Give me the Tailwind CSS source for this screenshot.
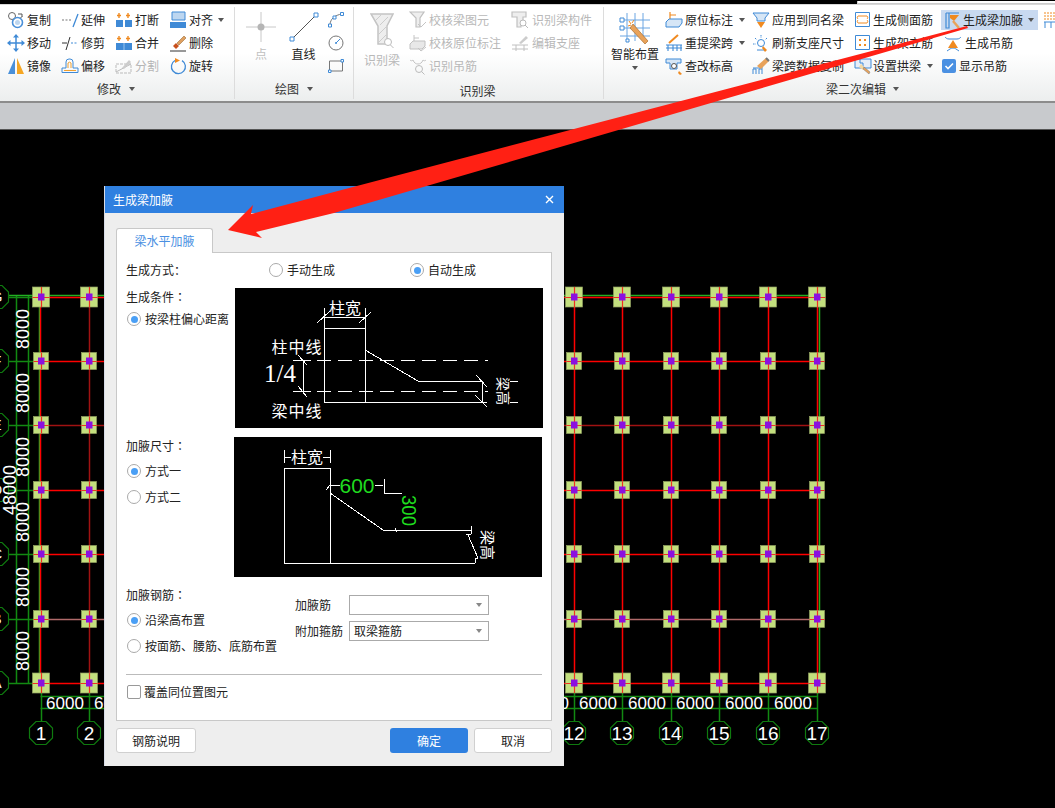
<!DOCTYPE html>
<html lang="zh-CN">
<head>
  <meta charset="UTF-8" />
  <title>生成梁加腋</title>
  <script src="https://cdn.jsdelivr.net/npm/@tailwindcss/browser@4"></script>
</head>
<body class="bg-black">
<div class="relative w-[1055px] h-[808px] overflow-hidden flex flex-col text-[12px] leading-none text-[#222] [font-family:'Noto_Sans_CJK_SC','Noto_Sans',sans-serif]">

  <!-- Ribbon -->
  <div class="relative h-[99px] shrink-0 flex border-t-[#d8d8d8] border-t border-b-2 border-b-[#8c8c8c] mt-[4px] bg-gradient-to-b from-white from-50% to-[#eceeee]">
    <div class="absolute left-[857px] -top-[4px] right-0 h-[3px] border-l border-b border-[#cccccc] bg-white"></div>

    <!-- 修改 -->
    <div class="w-[235px] shrink-0 h-[92px] mt-[2px] flex flex-col border-r border-[#dcdcdc]">
      <div class="h-[74px] pt-px pl-[7px] flex">
        <div class="w-[53px] flex flex-col">
          <div class="h-[23px] flex items-center gap-[2px]">
            <svg class="w-[18px] h-[18px]" viewBox="0 0 18 18" fill="none"><circle cx="5" cy="5" r="3.500" stroke="#666"/><circle cx="10.500" cy="11.500" r="5" stroke="#4a90d9" stroke-width="1.600"/><circle cx="10.500" cy="11.500" r="2.500" fill="#bcd6f0"/><path d="M11 3h4v3M13.500 7l1.500-1.500" stroke="#555"/></svg>
            <span>复制</span>
          </div>
          <div class="h-[23px] flex items-center gap-[2px]">
            <svg class="w-[18px] h-[18px]" viewBox="0 0 18 18" fill="#3f8ad6"><path d="M9 0l3 3.500H6zM9 18l-3-3.500h6zM0 9l3.500-3v6zM18 9l-3.500 3V6z"/><path d="M9 3v12M3 9h12" stroke="#3f8ad6" stroke-width="1.500"/></svg>
            <span>移动</span>
          </div>
          <div class="h-[23px] flex items-center gap-[2px]">
            <svg class="w-[18px] h-[18px]" viewBox="0 0 18 18"><path d="M8 1v16H1z" fill="#4a90d9"/><path d="M10 1v16h7z" fill="#f5a623"/></svg>
            <span>镜像</span>
          </div>
        </div>
        <div class="w-[54px] flex flex-col pl-px">
          <div class="h-[23px] flex items-center gap-[2px]">
            <svg class="w-[18px] h-[18px]" viewBox="0 0 18 18" fill="none"><path d="M1 9h10" stroke="#777" stroke-dasharray="2 1.500"/><path d="M12 16l5-13" stroke="#3f8ad6" stroke-width="1.300"/></svg>
            <span>延伸</span>
          </div>
          <div class="h-[23px] flex items-center gap-[2px]">
            <svg class="w-[18px] h-[18px]" viewBox="0 0 18 18" fill="none"><path d="M1 9h5" stroke="#333"/><path d="M10 9h7" stroke="#3f8ad6" stroke-dasharray="2 1.500"/><path d="M5 16l4-13" stroke="#333"/></svg>
            <span>修剪</span>
          </div>
          <div class="h-[23px] flex items-center gap-[2px]">
            <svg class="w-[18px] h-[18px]" viewBox="0 0 18 18" fill="none"><path d="M1 15.500V11h4V5a3 3 0 0 1 3-3h1a3 3 0 0 1 3 3v6h5v4.500z" stroke="#3f8ad6"/><path d="M3 13.500h12M7 11V6a2 2 0 0 1 3 0v5" stroke="#f0a030"/></svg>
            <span>偏移</span>
          </div>
        </div>
        <div class="w-[55px] flex flex-col pl-px">
          <div class="h-[23px] flex items-center gap-[2px]">
            <svg class="w-[18px] h-[18px]" viewBox="0 0 18 18"><path d="M1 9h7v7H1zM10 9h7v7h-7z" fill="#3f8ad6"/><path d="M4 2v5M2 4.500h4M13 2v5M11 4.500h4" stroke="#f08a20" stroke-width="1.400"/></svg>
            <span>打断</span>
          </div>
          <div class="h-[23px] flex items-center gap-[2px]">
            <svg class="w-[18px] h-[18px]" viewBox="0 0 18 18"><path d="M1 9h16v7H1z" fill="#3f8ad6"/><path d="M9 9v7" stroke="#9cc4ec"/><path d="M4 2v5M2 4.500h4M13 2v5M11 4.500h4" stroke="#f08a20" stroke-width="1.400"/></svg>
            <span>合并</span>
          </div>
          <div class="h-[23px] flex items-center gap-[2px] text-[#b5b5b5]">
            <svg class="w-[18px] h-[18px]" viewBox="0 0 18 18" fill="none"><path d="M1 7h15v9H1z" stroke="#bbb" stroke-dasharray="3 1"/><path d="M1 15L16 7" stroke="#bbb"/><path d="M7 11l7-8 2 2-7 7z" fill="#ccc"/></svg>
            <span>分割</span>
          </div>
        </div>
        <div class="flex flex-col">
          <div class="h-[23px] flex items-center gap-[2px]">
            <svg class="w-[18px] h-[18px]" viewBox="0 0 18 18"><path d="M3 1h13v8H3z" fill="#bcd6f0" stroke="#3f8ad6"/><path d="M1 11h16v6H1z" fill="#3f8ad6"/></svg>
            <span>对齐</span>
            <svg class="w-[6px] h-[4px] ml-[3px]" viewBox="0 0 6 4"><path d="M0 0h6L3 4z" fill="#555"/></svg>
          </div>
          <div class="h-[23px] flex items-center gap-[2px]">
            <svg class="w-[18px] h-[18px]" viewBox="0 0 18 18" fill="none"><path d="M8 9L15 2l2 2-7 7z" fill="#e0a060" stroke="#8a5a20" stroke-width=".5"/><path d="M4 12l3-3 3 3-3 3z" fill="#c8501c"/><path d="M1 17h16" stroke="#333"/></svg>
            <span>删除</span>
          </div>
          <div class="h-[23px] flex items-center gap-[2px]">
            <svg class="w-[18px] h-[18px]" viewBox="0 0 18 18" fill="none"><path d="M6 3.500A7 7 0 1 0 13 3.600" stroke="#3f8ad6" stroke-width="1.300"/><path d="M6 1v5l5-2.500z" fill="#f08a20"/></svg>
            <span>旋转</span>
          </div>
        </div>
      </div>
      <div class="h-[16px] flex items-center justify-center gap-[8px] pr-[2px]">
        <span class="text-[#333]">修改</span>
        <svg class="w-[6px] h-[4px]" viewBox="0 0 6 4"><path d="M0 0h6L3 4z" fill="#555"/></svg>
      </div>
    </div>

    <!-- 绘图 -->
    <div class="w-[119px] shrink-0 h-[92px] mt-[2px] flex flex-col border-r border-[#dcdcdc]">
      <div class="h-[74px] pl-[11px] flex">
        <div class="w-[30px] flex flex-col items-center">
          <svg class="w-[30px] h-[30px] mt-[5px]" viewBox="0 0 30 30" fill="none"><path d="M15 0v30M0 15h30" stroke="#c8c8c8"/><circle cx="15" cy="15" r="3.500" fill="#b5b5b5"/></svg>
          <span class="mt-[6px] text-[#c0c0c0]">点</span>
        </div>
        <div class="w-[29px] ml-[13px] flex flex-col items-center">
          <svg class="w-[30px] h-[30px] mt-[5px]" viewBox="0 0 30 30" fill="none"><path d="M3 27L27 3" stroke="#555"/><path d="M1 25h4v4H1zM25 1h4v4h-4z" fill="#fff" stroke="#3f8ad6"/></svg>
          <span class="mt-[6px]">直线</span>
        </div>
        <div class="ml-[10px] flex flex-col pt-px">
          <div class="h-[23px] flex items-center">
            <svg class="w-[16px] h-[16px]" viewBox="0 0 16 16" fill="none"><path d="M2 13C2 7 7 3 14 2" stroke="#777"/><path d="M.5 12h3v3h-3zM12.500 .5h3v3h-3zM5 4h3v3H5z" fill="#fff" stroke="#3f8ad6"/></svg>
          </div>
          <div class="h-[23px] flex items-center">
            <svg class="w-[16px] h-[16px]" viewBox="0 0 16 16" fill="none"><circle cx="8" cy="8" r="7" stroke="#777"/><path d="M8 8l4-4" stroke="#3f8ad6"/><circle cx="8" cy="8" r="1" fill="#3f8ad6"/></svg>
          </div>
          <div class="h-[23px] flex items-center">
            <svg class="w-[16px] h-[16px]" viewBox="0 0 16 16" fill="none"><path d="M1.500 3h13v10h-13z" stroke="#777"/><path d="M.5 12h2.500v2.500H.5zM13 1.500h2.500V4H13z" fill="#fff" stroke="#3f8ad6"/></svg>
          </div>
        </div>
      </div>
      <div class="h-[16px] flex items-center justify-center gap-[8px]">
        <span class="text-[#333]">绘图</span>
        <svg class="w-[6px] h-[4px]" viewBox="0 0 6 4"><path d="M0 0h6L3 4z" fill="#555"/></svg>
      </div>
    </div>

    <!-- 识别梁 -->
    <div class="w-[250px] shrink-0 h-[92px] mt-[2px] flex flex-col border-r border-[#dcdcdc]">
      <div class="h-[74px] pl-[10px] flex text-[#b8b8b8]">
        <div class="w-[36px] flex flex-col items-center">
          <svg class="w-[24px] h-[36px] mt-[6px]" viewBox="0 0 24 36" fill="none"><path d="M1 1h22l-6 12v18H8V13z" fill="#eee" stroke="#c4c4c4" stroke-width="1.500"/><path d="M5 8l6-6M10 12l8-8M8 22l8-8M8 30l8-8" stroke="#ccc"/><circle cx="18" cy="29" r="3.500" fill="#fff" stroke="#bbb"/><path d="M20.500 32l3 3" stroke="#bbb"/></svg>
          <span class="mt-[5px]">识别梁</span>
        </div>
        <div class="w-[102px] ml-[9px] flex flex-col pt-px">
          <div class="h-[23px] flex items-center gap-[2px]">
            <svg class="w-[18px] h-[18px]" viewBox="0 0 18 18" fill="none"><path d="M1 1h14l-4 6v9H7V7z" fill="#eee" stroke="#c0c0c0" stroke-width="1.200"/><path d="M9 13l3 3 5-5" stroke="#c4c4c4"/></svg>
            <span>校核梁图元</span>
          </div>
          <div class="h-[23px] flex items-center gap-[2px]">
            <svg class="w-[18px] h-[18px]" viewBox="0 0 18 18" fill="none"><path d="M5 8V1m0 3h5" stroke="#c4c4c4"/><path d="M1 10l3-3h12v5l-3 3H1z" fill="#e8e8e8" stroke="#c0c0c0"/><path d="M9 14l3 3 5-4" stroke="#c4c4c4"/></svg>
            <span>校核原位标注</span>
          </div>
          <div class="h-[23px] flex items-center gap-[2px]">
            <svg class="w-[18px] h-[18px]" viewBox="0 0 18 18" fill="none"><path d="M1 3c1 1 2 1 3 0M14 3c1 1 2 1 3 0M4 3c1 3 3 4 5 4s4-1 5-4" stroke="#c4c4c4"/><circle cx="10" cy="12" r="3.500" stroke="#bbb"/><path d="M12.500 14.500l3 3" stroke="#bbb"/></svg>
            <span>识别吊筋</span>
          </div>
        </div>
        <div class="flex flex-col pt-px">
          <div class="h-[23px] flex items-center gap-[3px]">
            <svg class="w-[18px] h-[18px]" viewBox="0 0 18 18" fill="none"><path d="M1 1h14v5h-3v4h-2v6H6V6H1z" fill="#eee" stroke="#c0c0c0" stroke-width="1.200"/><circle cx="12" cy="12" r="3" fill="#fff" stroke="#bbb"/><path d="M14 14l3 3" stroke="#bbb"/></svg>
            <span>识别梁构件</span>
          </div>
          <div class="h-[23px] flex items-center gap-[3px]">
            <svg class="w-[18px] h-[18px]" viewBox="0 0 18 18" fill="none"><path d="M8 9l7-7 2 2-7 6z" fill="#ccc"/><path d="M1 11h16M1 15h16M5 11v6M13 11v6" stroke="#c0c0c0"/></svg>
            <span>编辑支座</span>
          </div>
        </div>
      </div>
      <div class="h-[16px] mt-[2px] flex items-center justify-center pr-[2px]">
        <span class="text-[#333]">识别梁</span>
      </div>
    </div>

    <!-- 梁二次编辑 -->
    <div class="flex-1 min-w-0 h-[92px] mt-[2px] flex flex-col">
      <div class="h-[74px] pl-[7px] flex">
        <div class="w-[48px] shrink-0 flex flex-col items-center">
          <svg class="w-[32px] h-[32px] mt-[6px]" viewBox="0 0 32 32" fill="none"><path d="M8 0v28M16 0v28M24 0v28M1 7h30M1 15h30M1 23h30" stroke="#6aa5e2"/><path d="M1 5h4v4H1zM1 13h4v4H1zM7 26h3v3H7z" fill="#fff" stroke="#3f8ad6"/><path d="M14 11l15 17-3 3-15-16z" fill="#e8a25a" stroke="#a0601c" stroke-width=".6"/><path d="M10 8l2 3M15 7l-2 3M9 13l3-1" stroke="#f08a20"/></svg>
          <span class="mt-[3px] whitespace-nowrap">智能布置</span>
          <svg class="w-[6px] h-[4px] mt-[6px]" viewBox="0 0 6 4"><path d="M0 0h6L3 4z" fill="#555"/></svg>
        </div>
        <div class="w-[87px] shrink-0 ml-[6px] flex flex-col pt-px">
          <div class="h-[23px] flex items-center gap-[2px]">
            <svg class="w-[18px] h-[18px]" viewBox="0 0 18 18" fill="none"><path d="M5 8V1m0 3h6" stroke="#f08a20" stroke-width="1.200"/><path d="M1 11l3-3h13v4l-3 4H1z" fill="#d6e6f6" stroke="#3f8ad6"/></svg>
            <span>原位标注</span>
            <svg class="w-[6px] h-[4px] ml-[4px]" viewBox="0 0 6 4"><path d="M0 0h6L3 4z" fill="#555"/></svg>
          </div>
          <div class="h-[23px] flex items-center gap-[2px]">
            <svg class="w-[18px] h-[18px]" viewBox="0 0 18 18" fill="none"><path d="M4 9l9-8" stroke="#f08a20" stroke-width="2"/><path d="M1 11h16M3 11v6M8 11v6M12 11v6M16 11v6M1 14h16" stroke="#3f8ad6" stroke-width="1.100"/></svg>
            <span>重提梁跨</span>
            <svg class="w-[6px] h-[4px] ml-[4px]" viewBox="0 0 6 4"><path d="M0 0h6L3 4z" fill="#555"/></svg>
          </div>
          <div class="h-[23px] flex items-center gap-[2px]">
            <svg class="w-[18px] h-[18px]" viewBox="0 0 18 18" fill="none"><path d="M1 2h15v4h-4v6H5V6H1z" fill="#d6e6f6" stroke="#3f8ad6"/><circle cx="9" cy="9" r="2.500" fill="#fff" stroke="#555"/><path d="M14 14l3 3-2 1-2-2z" fill="#f08a20"/></svg>
            <span>查改标高</span>
          </div>
        </div>
        <div class="w-[103px] shrink-0 flex flex-col pt-px">
          <div class="h-[23px] flex items-center gap-[2px]">
            <svg class="w-[18px] h-[18px]" viewBox="0 0 18 18" fill="none"><path d="M1 2h16l-4 5v3H5V7z" fill="#d6e6f6" stroke="#3f8ad6"/><path d="M5 11h8l-4 6z" fill="#f08a20"/></svg>
            <span>应用到同名梁</span>
          </div>
          <div class="h-[23px] flex items-center gap-[2px]">
            <svg class="w-[18px] h-[18px]" viewBox="0 0 18 18" fill="none"><path d="M9 1v3M3 4l2 2M15 4l-2 2M1 10h3" stroke="#3f8ad6" stroke-dasharray="1.500 1"/><circle cx="9" cy="9" r="3.500" stroke="#3f8ad6"/><path d="M5 16h8" stroke="#3f8ad6"/><path d="M11 12l4 4-2 2-3-4z" fill="#f08a20"/></svg>
            <span>刷新支座尺寸</span>
          </div>
          <div class="h-[23px] flex items-center gap-[2px]">
            <svg class="w-[18px] h-[18px]" viewBox="0 0 18 18" fill="none"><path d="M1 17v-5h3v5M7 17v-5h3v5" stroke="#3f8ad6"/><path d="M1 11h10" stroke="#3f8ad6"/><path d="M5 9l9-8 3 3-8 8z" fill="#e8a25a"/><path d="M14 1l3 3" stroke="#777" stroke-width="2"/></svg>
            <span>梁跨数据复制</span>
          </div>
        </div>
        <div class="w-[86px] shrink-0 flex flex-col pt-px">
          <div class="h-[23px] flex items-center gap-[3px]">
            <svg class="w-[15px] h-[15px]" viewBox="0 0 15 15" fill="none"><path d="M.5 .5h14v14H.500z" stroke="#3f8ad6"/><path d="M3 4h9M3 11h9M3 4c-1 1-1 2 0 3M12 4c1 1 1 2 0 3M3 8c-1 1-1 2 0 3M12 8c1 1 1 2 0 3" stroke="#f08a20"/></svg>
            <span>生成侧面筋</span>
          </div>
          <div class="h-[23px] flex items-center gap-[3px]">
            <svg class="w-[15px] h-[15px]" viewBox="0 0 15 15" fill="none"><path d="M.5 .5h14v14H.500z" stroke="#3f8ad6"/><path d="M4 4h2v2H4zM9 4h2v2H9zM4 9h2v2H4zM9 9h2v2H9z" fill="#f08a20"/></svg>
            <span>生成架立筋</span>
          </div>
          <div class="h-[23px] flex items-center gap-px -ml-px">
            <svg class="w-[18px] h-[18px]" viewBox="0 0 18 18" fill="none"><path d="M1 2h16v9H1z" fill="#e6eef8" stroke="#3f8ad6"/><path d="M6 2v4h3v5" stroke="#3f8ad6"/><path d="M5 10l2-3 3 3-1 3z" fill="#f5d8a0"/><path d="M10 10l6 5-1 2-6-5z" fill="#e8a25a" stroke="#777" stroke-width=".5"/></svg>
            <span>设置拱梁</span>
            <svg class="w-[6px] h-[4px] ml-[5px]" viewBox="0 0 6 4"><path d="M0 0h6L3 4z" fill="#555"/></svg>
          </div>
        </div>
        <div class="w-[97px] shrink-0 flex flex-col">
          <div class="h-[20px] mt-[3px] flex items-center gap-[3px] pl-[4px] bg-[#c8d9f0]">
            <svg class="w-[15px] h-[17px]" viewBox="0 0 15 17" fill="none"><path d="M1 1h13M1 1v15h3V1" stroke="#3f8ad6" stroke-width="1.200"/><path d="M5 3h9l-5 6-4-3z" fill="#f08a20"/><path d="M8 9l6 7" stroke="#e8a25a" stroke-width="2.500"/></svg>
            <span>生成梁加腋</span>
            <svg class="w-[6px] h-[4px] ml-[2px]" viewBox="0 0 6 4"><path d="M0 0h6L3 4z" fill="#555"/></svg>
          </div>
          <div class="h-[23px] mt-px flex items-center gap-[3px] pl-[3px]">
            <svg class="w-[18px] h-[18px]" viewBox="0 0 18 18" fill="none"><path d="M1 3c1 1 2 2 4 2h8c2 0 3-1 4-2M3 17c3-2 4-3 6-3s3 1 6 3" stroke="#3f8ad6"/><path d="M9 6l5 8H4z" fill="#f08a20"/></svg>
            <span>生成吊筋</span>
          </div>
          <div class="h-[23px] flex items-center gap-[3px] pl-px">
            <span class="w-[14px] h-[14px] rounded-[2px] bg-[#4a90e2] flex items-center justify-center">
              <svg class="w-[10px] h-[10px]" viewBox="0 0 10 10" fill="none"><path d="M1.500 5l2.500 2.500 5-5" stroke="#fff" stroke-width="1.600"/></svg>
            </span>
            <span>显示吊筋</span>
          </div>
        </div>
        <div class="shrink-0 pt-[3px] pl-[5px]">
          <svg class="w-[14px] h-[18px]" viewBox="0 0 14 18" fill="none"><path d="M1 3h13M1 6h13M1 9h13" stroke="#f08a20" stroke-dasharray="2 1"/><path d="M1 12h13M2 12v6M8 12v6" stroke="#3f8ad6"/></svg>
        </div>
      </div>
      <div class="h-[16px] flex items-center gap-[7px] pl-[222px]">
        <span class="text-[#333]">梁二次编辑</span>
        <svg class="w-[6px] h-[4px]" viewBox="0 0 6 4"><path d="M0 0h6L3 4z" fill="#555"/></svg>
      </div>
    </div>
  </div>

  <!-- Grey strip -->
  <div class="h-[27px] shrink-0 bg-[#c8cacd] border-b border-[#555]"></div>

  <!-- CAD canvas -->
  <svg id="cad" class="block flex-1 bg-black" viewBox="0 130 1055 678" width="1055" height="678"></svg>

  <!-- Dialog -->
  <div class="absolute left-[104px] top-[186px] w-[460px] h-[580px] flex flex-col bg-[#eeeeee] border-l border-[#d8dde8]">
    <div class="h-[27px] shrink-0 flex items-center justify-between pl-[8px] pr-[10px] bg-[#2f80e0] text-white">
      <span>生成梁加腋</span>
      <svg class="w-[9px] h-[9px]" viewBox="0 0 9 9" fill="none"><path d="M1 1l7 7M8 1L1 8" stroke="#fff" stroke-width="1.400"/></svg>
    </div>

    <div class="mt-[15px] ml-[11px] flex">
      <div class="w-[97px] h-[25px] -mb-px z-10 flex items-center justify-center bg-white border border-b-0 border-[#c8c8c8] rounded-t-[3px] text-[#4a90e2]">梁水平加腋</div>
    </div>

    <div class="ml-[11px] w-[436px] h-[469px] shrink-0 bg-white border border-[#c8c8c8] pl-[9px] pt-[7px]">
      <!-- 生成方式 -->
      <div class="h-[20px] flex items-center">
        <span class="w-[143px]">生成方式<span class="[font-family:'Noto_Sans_CJK_TC']">：</span></span>
        <span class="w-[14px] h-[14px] rounded-full border border-[#aaa] bg-white"></span>
        <span class="ml-[4px] w-[123px]">手动生成</span>
        <span class="w-[14px] h-[14px] rounded-full border border-[#aaa] bg-white flex items-center justify-center"><span class="w-[7px] h-[7px] rounded-full bg-[#4a9ff5]"></span></span>
        <span class="ml-[4px]">自动生成</span>
      </div>

      <!-- 生成条件 -->
      <div class="mt-[8px] flex">
        <div class="w-[109px]">
          <div class="h-[18px] flex items-center">生成条件<span class="[font-family:'Noto_Sans_CJK_TC']">：</span></div>
          <div class="h-[18px] mt-[4px] flex items-center pl-px">
            <span class="w-[14px] h-[14px] rounded-full border border-[#aaa] bg-white flex items-center justify-center"><span class="w-[7px] h-[7px] rounded-full bg-[#4a9ff5]"></span></span>
            <span class="ml-[4px] whitespace-nowrap">按梁柱偏心距离</span>
          </div>
        </div>
        <svg class="block w-[308px] h-[140px] bg-black" viewBox="0 0 308 140" fill="none" stroke="#fff" shape-rendering="crispEdges">
          <path d="M89 40h41v74H89zM89 20v20M130 20v20M89 29h41M82 35l13-12M124 35l12-11"/>
          <path d="M130 62l53 31h65M130 114h122M247 93v21M241 87l11 12M240 107l12 12"/>
          <path d="M58 72h18M58 103h18M68 72v31M63 67l9 10M63 98l9 11M275 93h8M275 114h8"/>
          <path d="M82 72h171M82 103h171" stroke-dasharray="14 7"/>
          <g fill="#fff" stroke="none" font-size="16" text-anchor="middle">
            <text x="110" y="26">柱宽</text>
            <text x="62" y="65" letter-spacing="1">柱中线</text>
            <text x="62" y="129" letter-spacing="1">梁中线</text>
            <text x="45" y="94" font-size="25" font-family="Liberation Serif">1/4</text>
            <text transform="translate(263 103) rotate(90)" font-size="14">梁高</text>
          </g>
        </svg>
      </div>

      <!-- 加腋尺寸 -->
      <div class="mt-[9px] flex">
        <div class="w-[108px]">
          <div class="h-[18px] flex items-center">加腋尺寸<span class="[font-family:'Noto_Sans_CJK_TC']">：</span></div>
          <div class="h-[18px] mt-[7px] flex items-center pl-px">
            <span class="w-[14px] h-[14px] rounded-full border border-[#aaa] bg-white flex items-center justify-center"><span class="w-[7px] h-[7px] rounded-full bg-[#4a9ff5]"></span></span>
            <span class="ml-[4px]">方式一</span>
          </div>
          <div class="h-[18px] mt-[8px] flex items-center pl-px">
            <span class="w-[14px] h-[14px] rounded-full border border-[#aaa] bg-white"></span>
            <span class="ml-[4px]">方式二</span>
          </div>
        </div>
        <svg class="block w-[308px] h-[140px] bg-black" viewBox="0 0 308 140" fill="none" stroke="#fff" shape-rendering="crispEdges">
          <path d="M50 31h46v95H50zM50 13v13M96 13v13M50 20h7M89 20h7M96 48h10M141 48h8M150 42v14M150 56h18"/>
          <path d="M96 56l53 37h88M237 89v8M232 97h5M234 98l10 23M241 121h3M241 121v5M50 126h191M161 91l2 4M92 53l4-5"/>
          <g fill="#fff" stroke="none" font-size="16" text-anchor="middle">
            <text x="73" y="26">柱宽</text>
            <text transform="translate(248 108) rotate(90)" font-size="15">梁高</text>
          </g>
          <g fill="#1fdc1f" stroke="none" font-family="Liberation Sans">
            <text x="123" y="56" font-size="21" text-anchor="middle">600</text>
            <text transform="translate(168 58) rotate(90)" font-size="20" textLength="31" lengthAdjust="spacingAndGlyphs">300</text>
          </g>
        </svg>
      </div>

      <!-- 加腋钢筋 -->
      <div class="mt-[9px] flex">
        <div class="w-[169px]">
          <div class="h-[18px] flex items-center">加腋钢筋<span class="[font-family:'Noto_Sans_CJK_TC']">：</span></div>
          <div class="h-[18px] mt-[7px] flex items-center pl-px">
            <span class="w-[14px] h-[14px] rounded-full border border-[#aaa] bg-white flex items-center justify-center"><span class="w-[7px] h-[7px] rounded-full bg-[#4a9ff5]"></span></span>
            <span class="ml-[4px]">沿梁高布置</span>
          </div>
          <div class="h-[18px] mt-[8px] flex items-center pl-px">
            <span class="w-[14px] h-[14px] rounded-full border border-[#aaa] bg-white"></span>
            <span class="ml-[4px] whitespace-nowrap">按面筋、腰筋、底筋布置</span>
          </div>
        </div>
        <div class="pt-[9px]">
          <div class="h-[20px] flex items-center">
            <span class="w-[54px]">加腋筋</span>
            <div class="w-[140px] h-[20px] border border-[#aaa] bg-white flex items-center justify-end pr-[6px]">
              <svg class="w-[6px] h-[4px]" viewBox="0 0 6 4"><path d="M0 0h6L3 4z" fill="#888"/></svg>
            </div>
          </div>
          <div class="h-[20px] mt-[6px] flex items-center">
            <span class="w-[54px]">附加箍筋</span>
            <div class="w-[140px] h-[20px] border border-[#aaa] bg-white flex items-center justify-between pl-[4px] pr-[6px]">
              <span>取梁箍筋</span>
              <svg class="w-[6px] h-[4px]" viewBox="0 0 6 4"><path d="M0 0h6L3 4z" fill="#888"/></svg>
            </div>
          </div>
        </div>
      </div>

      <div class="mt-[19px] w-[416px] h-px bg-[#bbbbbb]"></div>

      <div class="mt-[8px] h-[18px] flex items-center pl-px">
        <span class="w-[14px] h-[14px] rounded-[2px] border border-[#999] bg-white"></span>
        <span class="ml-[3px]">覆盖同位置图元</span>
      </div>
    </div>

    <div class="mt-[7px] ml-[11px] w-[436px] h-[25px] flex text-[#222]">
      <div class="w-[80px] flex items-center justify-center bg-white border border-[#d0d0d0] rounded-[3px]">钢筋说明</div>
      <div class="ml-[194px] w-[78px] flex items-center justify-center bg-[#2f80e0] text-white rounded-[3px]">确定</div>
      <div class="ml-[6px] w-[78px] flex items-center justify-center bg-white border border-[#d0d0d0] rounded-[3px]">取消</div>
    </div>
  </div>

  <!-- Red annotation arrow -->
  <svg class="absolute left-0 top-0 pointer-events-none" width="1055" height="808" viewBox="0 0 1055 808">
    <path d="M967 26L334 192 251 214 253 205 228 230 262 238 256 232 334 213 968 28z" fill="#ff2014"/>
  </svg>
</div>

<script>
  // axis positions of the drawing
  const cols = [[41,'1'],[89,'2'],[574,'12'],[622,'13'],[671,'14'],[719,'15'],[768,'16'],[817,'17']];
  const rows = [297,361,425,490,554,619,683];
  const letters = ['G','F','E','D','C','B','A'];
  const dimRed = { 425: '#a01212', 619: '#b06a6a' };
  let s = '';

  // green axes and dimension lines
  const g = '#128a12';
  s += `<g transform="translate(.5 .5)" stroke-width="1.500" fill="none">`;
  s += `<path d="M16 295V683M28 295V683M40 696H817M40 708H817" stroke="${g}"/>`;
  rows.forEach(y => { s += `<path d="M0 ${y}H40" stroke="${g}"/>`; });
  cols.forEach(c => { s += `<path d="M${c[0]} 683V721" stroke="${g}"/>`; });
  s += `<path d="M0 295H825M39 288V692M819 288V692" stroke="#22b022"/>`;

  // beams
  rows.forEach(y => { s += `<path d="M40 ${y}H817" stroke="${dimRed[y] || '#ff0000'}"/>`; });
  cols.forEach(c => {
    const col = c[0] === 89 ? '#a01212' : '#ff0000';
    s += `<path d="M${c[0] === 41 ? 40 : c[0]} 297V683" stroke="${col}"/>`;
  });
  s += `</g>`;

  // columns
  rows.forEach((y, i) => cols.forEach(c => {
    const big = i === 0 || i === rows.length - 1;
    const w = big ? 17 : 15, h = big ? 20 : 17;
    s += `<rect x="${c[0]-w/2}" y="${y-h/2}" width="${w}" height="${h}" fill="#c3df7e" stroke="#8f9f60" stroke-width=".7"/>`;
    s += `<path d="M${c[0]+.5} ${y-h/2}V${y+h/2}M${c[0]-w/2} ${y+.5}H${c[0]+w/2}" stroke="#f03020" stroke-width="1.200"/>`;
    s += `<rect x="${c[0]-3}" y="${y-3.5}" width="6.500" height="7" fill="#8a10e0"/>`;
  }));

  // bubbles
  const oct = (x, y) => {
    const a = 11.5, b = 5;
    return `<polygon points="${x-b},${y-a} ${x+b},${y-a} ${x+a},${y-b} ${x+a},${y+b} ${x+b},${y+a} ${x-b},${y+a} ${x-a},${y+b} ${x-a},${y-b}" stroke="#0f7a0f" stroke-width="1.200" fill="#000"/>`;
  };
  cols.forEach(c => {
    s += oct(c[0], 733);
    s += `<text x="${c[0]}" y="740" fill="#fff" font-size="19" text-anchor="middle" font-family="Liberation Sans">${c[1]}</text>`;
  });
  rows.forEach((y, i) => {
    s += oct(-3, y);
    s += `<text x="-3" y="${y+5}" fill="#fff" font-size="14" text-anchor="middle" font-family="Liberation Sans">${letters[i]}</text>`;
  });

  // dimension text
  [65,113,550,598,647,695,744,793].forEach(x => {
    s += `<text x="${x}" y="709" fill="#fff" font-size="17" text-anchor="middle" font-family="Liberation Sans">6000</text>`;
  });
  [329,393,457,522,587,651].forEach(y => {
    s += `<text transform="translate(29 ${y}) rotate(-90)" fill="#fff" font-size="18" text-anchor="middle" font-family="Liberation Sans">8000</text>`;
  });
  s += `<text transform="translate(16 490) rotate(-90)" fill="#fff" font-size="18" text-anchor="middle" font-family="Liberation Sans">48000</text>`;

  document.getElementById('cad').innerHTML = s;
</script>
</body>
</html>
